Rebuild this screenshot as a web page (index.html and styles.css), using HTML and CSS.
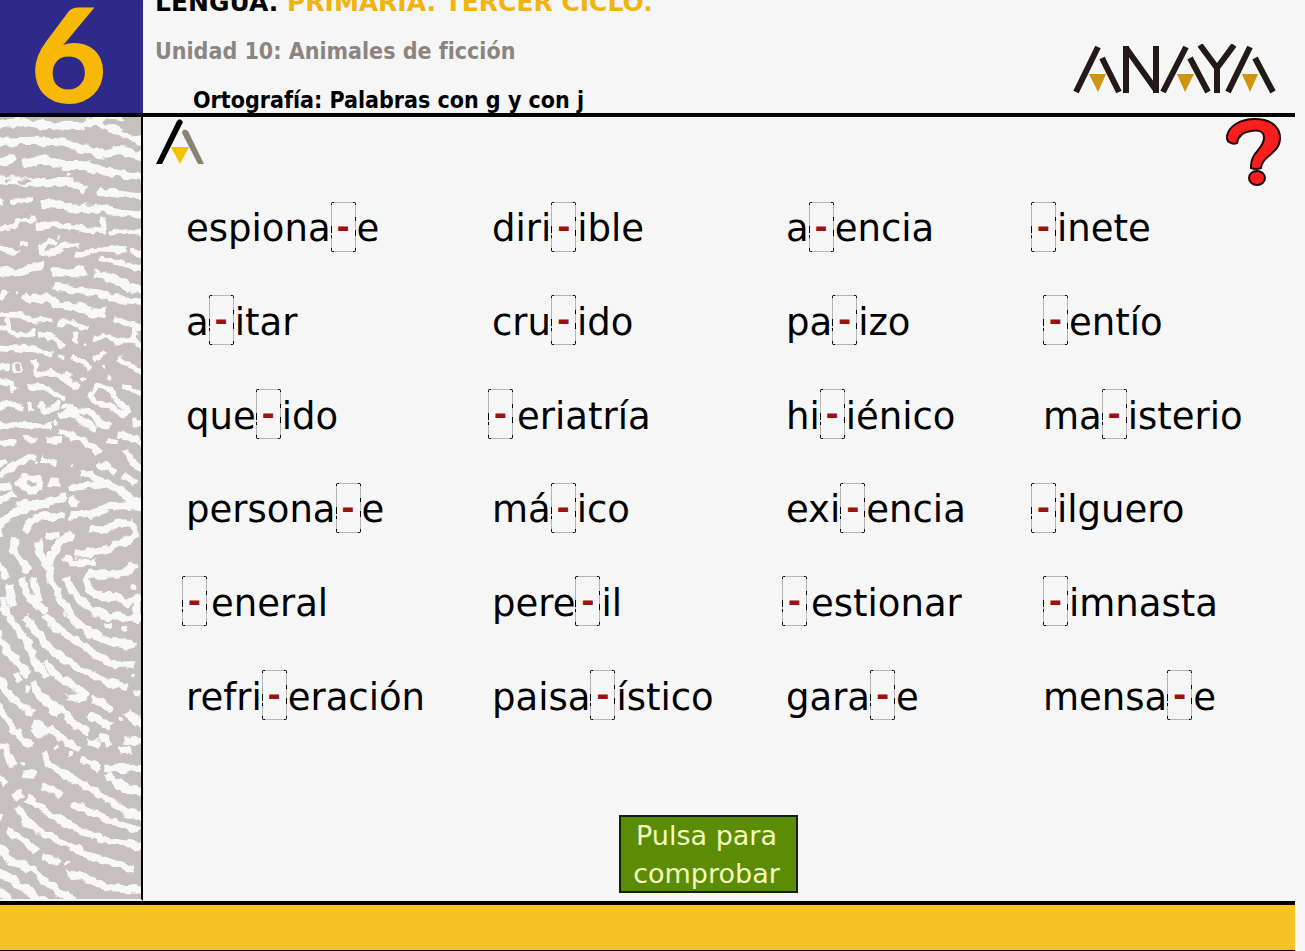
FILE: index.html
```
<!DOCTYPE html>
<html lang="es">
<head>
    <meta charset="UTF-8">
    <meta name="viewport" content="width=device-width, initial-scale=1.0">
    <title>Ortografía: Palabras con g y con j</title>
    <link rel="stylesheet" href="styles.css">
</head>
<body>
    <div class="page">
        <!-- Header -->
        <header class="header">
            <div class="grade">6</div>
            <div class="titles">
                <h1>LENGUA. <span>PRIMARIA. TERCER CICLO.</span></h1>
                <h2>Unidad 10: Animales de ficción</h2>
                <h3>Ortografía: Palabras con g y con j</h3>
            </div>
            <svg class="brand" viewBox="0 0 204 50" role="img" aria-label="Anaya">
                <g fill="none" stroke="#231a17" stroke-width="6">
                    <path d="M3 48L25 3M29 14L46 48M90 48L113 3M117 14L135 48M155 48L177 3M182 14L200 48"/>
                    <path d="M53 49V2M53 4L83 46M83 49V2M127 1L144 24L161 1M144 22V49"/>
                </g>
                <path d="M16 30H33L25 48ZM104 30H121L112 48ZM169 30H185L177 48Z" fill="#cf940c"/>
            </svg>
        </header>

        <div class="content">
            <!-- Fingerprint strip -->
            <div class="sidebar">
                <svg class="print" viewBox="0 21 426 2346" preserveAspectRatio="none" aria-hidden="true">
                    <filter id="rough" x="-5%" y="-5%" width="110%" height="110%">
                        <feTurbulence type="fractalNoise" baseFrequency="0.035" numOctaves="2" seed="4" result="noise"/>
                        <feDisplacementMap in="SourceGraphic" in2="noise" scale="24" xChannelSelector="R" yChannelSelector="G"/>
                    </filter>
                    <g filter="url(#rough)" fill="none" stroke="#f9f8f8" stroke-width="17" stroke-linejoin="round">
                        <g stroke-width="24">
                            <path d="M-15 47L50 36L130 45L240 48L290 32L350 62L445 100M290 20L340 30L370 20"/>
                            <path d="M-15 96L100 92L200 98L260 118L300 133L360 120L445 145"/>
                            <path d="M-15 162L45 142M70 162L130 148L190 165L250 165L320 185L445 205"/>
                            <path d="M-15 207L60 212L130 222L200 212L260 243M295 245L350 250L445 262"/>
                            <path d="M125 282L180 284L230 296L310 296L370 308L445 316"/>
                            <path d="M-15 488L60 486L135 464M155 482L220 490L260 480M285 490L340 505L390 530L445 545"/>
                            <path d="M165 530L230 540L280 545L330 560L380 574L445 580"/>
                            <path d="M70 555L95 572L140 562L180 585L250 595L290 612L320 606"/>
                        </g>
                        <path d="M-10 272L10 275M32 272L100 270M-15 357L40 352L55 330L110 328M105 350L170 342L210 350L250 358L315 365L310 320M335 370L380 360L445 370"/>
                        <path d="M60 402L84 404M-15 405L15 418L55 430M115 420L145 395L175 402M120 422L150 432L180 420L195 405L240 408M228 432L270 430L300 415L380 420M395 420L430 438M305 445L360 458L445 478"/>
                        <path d="M-15 570L25 545M-15 615L50 614L100 630L155 626M20 625L30 665L65 678L105 666M-15 655L30 655M175 645L205 635L270 655M225 665L230 700M120 674L160 684L195 708"/>
                        <path d="M345 625L380 640L445 655M280 688L320 672L350 695L395 688L445 718M405 655L402 690M-15 712L50 715L100 718L160 734M220 742L275 770M285 748L312 725M355 745L400 770L445 790"/>
                        <path d="M-15 772L30 772M105 750L110 795L160 785L205 815L240 835M190 812L210 790M82 828L125 830L192 864M-15 815L35 818L47 844M368 830L425 852"/>
                        <path d="M270 860L290 830L330 835L350 868L385 900L375 915L340 890L305 884Z"/>
                        <g stroke-width="20">
                            <path d="M-15 895L20 880L70 895M92 878L92 902M118 883L135 905L180 883M190 885L230 900L270 905L300 938L335 952M175 915L215 910L250 935L290 958M400 940L440 935"/>
                            <path d="M-15 950L60 945L155 950M175 960L240 985L295 1022L280 1030M355 970L390 980L440 1010M325 988L355 996M70 988L108 987M138 988L184 993M-15 1000L44 996"/>
                            <path d="M0 1100L40 1065L75 1045L105 1042M122 1045L170 1060M-15 1064L20 1050M150 1118L180 1120M380 1020L400 1055L440 1085M298 1060L352 1090M240 1085L275 1095L315 1120L205 1135M315 1115L365 1145L440 1195M372 1095L410 1120"/>
                            <path d="M60 1118L80 1100L115 1103L120 1130L100 1142L75 1135ZM-15 1135L38 1130M-15 1175L45 1150M50 1185L120 1178L180 1172"/>
                        </g>
                        <g fill="#f9f8f8" stroke="none">
                            <circle cx="206" cy="190" r="7"/><circle cx="175" cy="378" r="6"/><circle cx="50" cy="548" r="5"/>
                            <circle cx="185" cy="738" r="7"/><circle cx="250" cy="810" r="8"/><circle cx="258" cy="700" r="6"/>
                            <circle cx="315" cy="770" r="6"/><circle cx="328" cy="800" r="6"/><circle cx="167" cy="940" r="6"/>
                            <circle cx="110" cy="1060" r="6"/><circle cx="215" cy="1070" r="5"/><ellipse cx="55" cy="772" rx="18" ry="16"/>
                        </g>
                        <g fill="#c6c1be" stroke="none">
                            <ellipse cx="25" cy="208" rx="7" ry="6"/><ellipse cx="72" cy="212" rx="14" ry="7"/>
                            <ellipse cx="340" cy="38" rx="30" ry="11"/><ellipse cx="400" cy="65" rx="26" ry="11"/>
                            <ellipse cx="54" cy="772" rx="8" ry="9"/>
                        </g>
                        <!-- lower whorl -->
                        <g transform="translate(0 1170)" stroke-width="22">
                            <path d="M-5 110L0 70L30 45L90 25L150 5L205 -12M75 98L95 60L140 48L192 50M210 45L280 42L330 20L390 15L445 28M375 -15L415 15M210 5L238 12"/>
                            <path d="M265 82L315 88L355 70L395 68L412 90L405 110L350 135L300 155L225 162M195 172L215 188L290 186"/>
                            <path d="M45 115L40 150L60 180L90 214M110 120L125 165L148 210L152 240L180 290L215 350L265 395L330 425L412 437"/>
                            <path d="M218 103L180 130L155 165L148 195M135 108L180 103M-10 185L22 238"/>
                            <path d="M404 190L390 215L330 222L275 222L260 240L275 275L310 290L350 290L385 308L415 292L415 355L335 350L285 335L245 300L215 270L200 232"/>
                            <path d="M66 235L80 285L105 302L135 335M98 235L115 280L122 305M25 255L42 325M10 290L20 340L60 395L90 440L110 495L140 530"/>
                            <path d="M76 348L115 400L155 450L210 490L280 525L335 550L385 562M130 345L180 390L240 430L290 465L350 495L410 495"/>
                            <path d="M-10 395L20 450L50 485L88 526M48 520L62 545M-10 525L30 590L70 620L100 642M135 485L165 520L210 550L260 580L250 595L200 590M275 598L310 605L335 635"/>
                            <path d="M98 545L120 590L180 625L225 675L275 700M150 635L178 645M100 665L125 675L140 695L120 705L105 680M145 685L190 715L240 753"/>
                            <path d="M-10 615L30 670L60 710L100 740M-15 735L15 740L38 800M-15 825L18 850M266 643L335 682M382 635L440 685M262 725L295 730M298 708L325 715L332 740M356 750L394 752M376 720L440 727"/>
                            <path d="M132 755L150 795L210 830L270 865L330 900L380 935L445 955M242 776L300 804M315 805L445 806M325 820L345 845L385 865L440 878M70 822L105 826M122 854L184 884M36 893L65 878"/>
                            <path d="M215 913L260 928L320 955L370 975L420 993M80 892L130 930L190 965L250 995L330 1022L445 1040M55 920L80 965L140 1005L200 1032L250 1060L330 1085L405 1107"/>
                            <path d="M20 993L55 1008L110 1054M130 1070L180 1087M-10 1040L40 1085L100 1110L145 1155L220 1200L270 1225M200 1118L260 1135L320 1160L370 1165L445 1168M-10 1110L50 1148L110 1190L170 1225M-10 1170L40 1210M-15 945L8 957"/>
                        </g>
                        <g transform="translate(0 1170)" fill="#f9f8f8" stroke="none">
                            <circle cx="405" cy="262" r="11"/><circle cx="328" cy="375" r="10"/><circle cx="378" cy="386" r="9"/>
                            <circle cx="403" cy="525" r="7"/><circle cx="415" cy="577" r="10"/><circle cx="82" cy="568" r="8"/>
                            <circle cx="364" cy="655" r="8"/><circle cx="170" cy="742" r="8"/><circle cx="214" cy="765" r="7"/>
                            <circle cx="67" cy="790" r="7"/><circle cx="203" cy="1090" r="8"/>
                        </g>
                    </g>
                </svg>
            </div>

            <!-- Exercise -->
            <main class="exercise">
                <div class="toolbar">
                    <svg class="mark" viewBox="0 0 48 47" aria-hidden="true">
                        <path d="M0 46L21 3Q24 -1 27 4L6 46Z" fill="#000"/>
                        <path d="M26 15Q27 9 32 13L48 46H42Z" fill="#898370"/>
                        <path d="M15 29H33L24 46Z" fill="#f4c100"/>
                    </svg>
                    <button class="help" type="button" aria-label="Ayuda">
                        <svg viewBox="0 0 55 69" aria-hidden="true">
                            <path d="M1 18C3 8 14 1 29 1C45 1 54 9 54 20C54 36 36 37 35 50Q30 52 25 50C24 34 38 31 38 20C38 12 31 12 25 13C15 14 12 19 11 25C6 27 0 24 1 18Z" fill="#fa1e1e" stroke="#210606" stroke-width="2"/>
                            <ellipse cx="31" cy="60" rx="8" ry="7" fill="#fa1e1e" stroke="#210606" stroke-width="2"/>
                        </svg>
                    </button>
                </div>

                <div class="words">
                    <label class="word">espiona<input class="slot" maxlength="1" value="-">e</label>
                    <label class="word">diri<input class="slot" maxlength="1" value="-">ible</label>
                    <label class="word">a<input class="slot" maxlength="1" value="-">encia</label>
                    <label class="word outdent"><input class="slot" maxlength="1" value="-">inete</label>

                    <label class="word">a<input class="slot" maxlength="1" value="-">itar</label>
                    <label class="word">cru<input class="slot" maxlength="1" value="-">ido</label>
                    <label class="word">pa<input class="slot" maxlength="1" value="-">izo</label>
                    <label class="word"><input class="slot" maxlength="1" value="-">entío</label>

                    <label class="word">que<input class="slot" maxlength="1" value="-">ido</label>
                    <label class="word first"><input class="slot" maxlength="1" value="-">eriatría</label>
                    <label class="word">hi<input class="slot" maxlength="1" value="-">iénico</label>
                    <label class="word">ma<input class="slot" maxlength="1" value="-">isterio</label>

                    <label class="word">persona<input class="slot" maxlength="1" value="-">e</label>
                    <label class="word">má<input class="slot" maxlength="1" value="-">ico</label>
                    <label class="word">exi<input class="slot" maxlength="1" value="-">encia</label>
                    <label class="word outdent"><input class="slot" maxlength="1" value="-">ilguero</label>

                    <label class="word first"><input class="slot" maxlength="1" value="-">eneral</label>
                    <label class="word">pere<input class="slot" maxlength="1" value="-">il</label>
                    <label class="word first"><input class="slot" maxlength="1" value="-">estionar</label>
                    <label class="word"><input class="slot" maxlength="1" value="-">imnasta</label>

                    <label class="word">refri<input class="slot" maxlength="1" value="-">eración</label>
                    <label class="word">paisa<input class="slot" maxlength="1" value="-">ístico</label>
                    <label class="word">gara<input class="slot" maxlength="1" value="-">e</label>
                    <label class="word">mensa<input class="slot" maxlength="1" value="-">e</label>
                </div>

                <div class="actions">
                    <button class="check" type="button">Pulsa para comprobar</button>
                </div>
            </main>
        </div>

        <footer class="footer"></footer>
    </div>
</body>
</html>
```
FILE: styles.css
```
* {
    box-sizing: border-box;
}

body {
    margin: 0;
    background: #f7f6f6;
    font-family: "DejaVu Sans", Verdana, sans-serif;
    color: #000;
}

.page {
    display: flex;
    flex-direction: column;
    min-height: 100vh;
    margin-right: 10px;
}

/* Header */
.header {
    display: flex;
    height: 117px;
    border-bottom: 4px solid #000;
}

.grade {
    width: 143px;
    padding-right: 6px;
    background: #2e2a8b;
    color: #f8b906;
    font-family: Lato, sans-serif;
    font-size: 132px;
    font-weight: 900;
    line-height: 105px;
    text-align: center;
}

.titles {
    flex: 1;
    padding-left: 12px;
}

.titles h1,
.titles h2,
.titles h3 {
    margin: 0;
    font-size: 23px;
    font-weight: bold;
    line-height: 49px;
}

.titles h2,
.titles h3 {
    font-family: "DejaVu Sans Condensed", "DejaVu Sans", sans-serif;
    font-stretch: condensed;
}

/* The top line runs off the upper edge */
.titles h1 {
    margin-top: -22px;
    font-size: 25px;
}

.titles h1 span {
    color: #f1b40f;
}

.titles h2 {
    color: #8c857f;
}

.titles h3 {
    padding-left: 38px;
}

.brand {
    width: 204px;
    height: 50px;
    margin: 44px 18px 0 0;
}

/* Fingerprint and exercise */
.content {
    display: flex;
    flex: 1;
}

.sidebar {
    position: relative;
    width: 143px;
    background: #c6c1be;
    border-right: 2px solid #000;
    border-bottom: 2px solid #f7f6f6;
}

.print {
    position: absolute;
    width: 100%;
    height: 100%;
}

.exercise {
    display: flex;
    flex: 1;
    flex-direction: column;
}

.toolbar {
    display: flex;
    justify-content: space-between;
    height: 65px;
    padding: 1px 14px 0 13px;
}

.mark {
    width: 48px;
    height: 47px;
}

.help {
    width: 55px;
    height: 69px;
    padding: 0;
    border: none;
    background: none;
    cursor: pointer;
}

.help svg {
    display: block;
    width: 55px;
    height: 69px;
}

/* Words */
.words {
    display: grid;
    flex: 1;
    grid-template-columns: 306fr 294fr 257fr 252fr;
    grid-template-rows: repeat(6, 1fr);
    padding-left: 43px;
    font-size: 37px;
}

.word {
    display: flex;
    align-items: center;
    white-space: nowrap;
}

.slot {
    width: 25px;
    height: 50px;
    margin: 0 1px 4px 0;
    padding: 0;
    border: none;
    border-radius: 2px;
    background:
        linear-gradient(90deg, #000 3px, #b5b5b5 3px 22px, #000 22px) top / 100% 1px no-repeat,
        linear-gradient(90deg, #000 3px, #b5b5b5 3px 22px, #000 22px) bottom / 100% 1px no-repeat,
        linear-gradient(#000 3px, #b5b5b5 3px 24px, #000 24px 31px, #ccc 31px 33px, #000 33px 36px, #b5b5b5 36px 46px, #000 46px) left / 1px 100% no-repeat,
        linear-gradient(#000 3px, #b5b5b5 3px 15px, #000 15px 19px, #b5b5b5 19px 28px, #000 28px 34px, #b5b5b5 34px 46px, #000 46px) right / 1px 100% no-repeat;
    color: #9c1111;
    font-family: inherit;
    font-size: 32px;
    font-weight: bold;
    text-align: center;
}

.first {
    margin-left: -4px;
}

.first .slot {
    margin-right: 4px;
}

.outdent {
    margin-left: -12px;
}

/* Check button */
.actions {
    display: flex;
    justify-content: center;
    padding: 71px 21px 8px 0;
}

.check {
    width: 179px;
    height: 78px;
    padding: 0 8px 3px 4px;
    border: 2px solid #13200a;
    background: #5c8c04;
    color: #f3fbc0;
    font-family: inherit;
    font-size: 27px;
    line-height: 38px;
    cursor: pointer;
}

.footer {
    height: 50px;
    border-top: 4px solid #000;
    border-bottom: 1px solid #000;
    background: #f5c323;
}
```
